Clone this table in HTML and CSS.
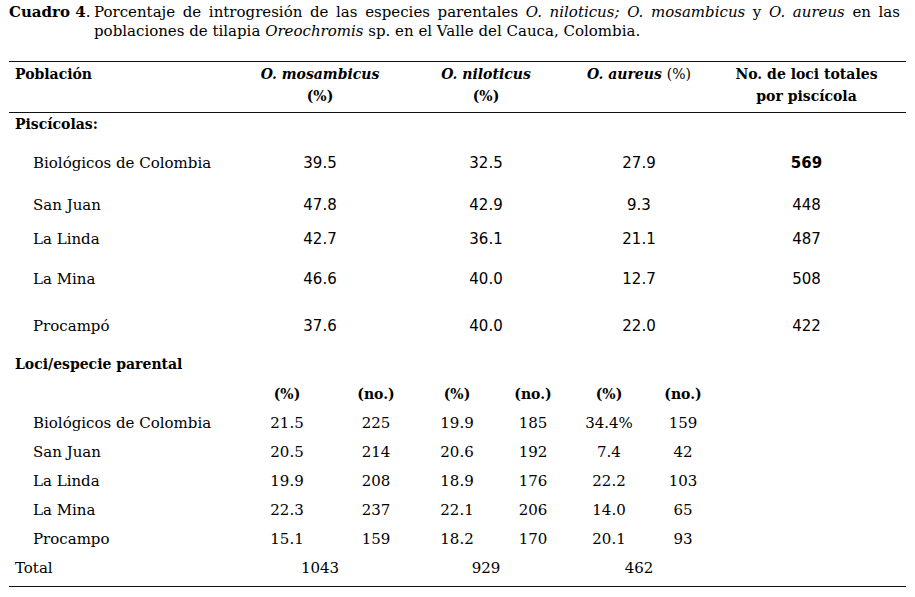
FILE: index.html
```html
<!DOCTYPE html>
<html lang="es">
<head>
<meta charset="utf-8">
<title>Cuadro 4</title>
<link rel="stylesheet" href="styles.css">
</head>
<body>
<div class="page">
  <div class="caption">
    <div class="cap-label"><b>Cuadro 4</b>.</div>
    <div class="cap-text">
      <div class="cap-line1">Porcentaje de introgresión de las especies parentales <i>O. niloticus;</i> <i>O. mosambicus</i> y <i>O. aureus</i> en las</div>
      <div>poblaciones de tilapia <i>Oreochromis</i> sp. en el Valle del Cauca, Colombia.</div>
    </div>
  </div>

  <div class="rule rule-top"></div>

  <div class="grid-top head">
    <div class="c-label hlabel">Población</div>
    <div class="c"><i>O. mosambicus</i><br>(%)</div>
    <div class="c"><i>O. niloticus</i><br>(%)</div>
    <div class="c"><i>O. aureus</i> <span class="reg">(%)</span></div>
    <div class="c">No. de loci totales<br>por piscícola</div>
  </div>

  <div class="rule"></div>

  <div class="section-title first">Piscícolas:</div>

  <div class="grid-top row sp1">
    <div class="c-label">Biológicos de Colombia</div>
    <div class="c num">39.5</div><div class="c num">32.5</div><div class="c num">27.9</div><div class="c num strong">569</div>
  </div>
  <div class="grid-top row sp2">
    <div class="c-label">San Juan</div>
    <div class="c num">47.8</div><div class="c num">42.9</div><div class="c num">9.3</div><div class="c num">448</div>
  </div>
  <div class="grid-top row sp3">
    <div class="c-label">La Linda</div>
    <div class="c num">42.7</div><div class="c num">36.1</div><div class="c num">21.1</div><div class="c num">487</div>
  </div>
  <div class="grid-top row sp4">
    <div class="c-label">La Mina</div>
    <div class="c num">46.6</div><div class="c num">40.0</div><div class="c num">12.7</div><div class="c num">508</div>
  </div>
  <div class="grid-top row sp5">
    <div class="c-label">Procampó</div>
    <div class="c num">37.6</div><div class="c num">40.0</div><div class="c num">22.0</div><div class="c num">422</div>
  </div>

  <div class="section-title sp6">Loci/especie parental</div>

  <div class="grid-bot sub">
    <div></div>
    <div class="c">(%)</div><div class="c">(no.)</div><div class="c">(%)</div><div class="c">(no.)</div><div class="c">(%)</div><div class="c">(no.)</div>
  </div>
  <div class="grid-bot line">
    <div class="c-label">Biológicos de Colombia</div>
    <div class="c">21.5</div><div class="c">225</div><div class="c">19.9</div><div class="c">185</div><div class="c">34.4%</div><div class="c">159</div>
  </div>
  <div class="grid-bot line">
    <div class="c-label">San Juan</div>
    <div class="c">20.5</div><div class="c">214</div><div class="c">20.6</div><div class="c">192</div><div class="c">7.4</div><div class="c">42</div>
  </div>
  <div class="grid-bot line">
    <div class="c-label">La Linda</div>
    <div class="c">19.9</div><div class="c">208</div><div class="c">18.9</div><div class="c">176</div><div class="c">22.2</div><div class="c">103</div>
  </div>
  <div class="grid-bot line">
    <div class="c-label">La Mina</div>
    <div class="c">22.3</div><div class="c">237</div><div class="c">22.1</div><div class="c">206</div><div class="c">14.0</div><div class="c">65</div>
  </div>
  <div class="grid-bot line">
    <div class="c-label">Procampo</div>
    <div class="c">15.1</div><div class="c">159</div><div class="c">18.2</div><div class="c">170</div><div class="c">20.1</div><div class="c">93</div>
  </div>
  <div class="grid-top line">
    <div class="c-label total">Total</div>
    <div class="c">1043</div><div class="c">929</div><div class="c">462</div><div></div>
  </div>

  <div class="rule rule-bottom"></div>
</div>
</body>
</html>
```

FILE: styles.css
```css
html, body {
  margin: 0;
  padding: 0;
  background: #ffffff;
}

body {
  font-family: "DejaVu Serif", "Liberation Serif", serif;
  font-size: 15px;
  color: #000;
}

.page {
  width: 897px;
  padding: 3px 9px 0 9px;
}

.caption {
  display: flex;
  line-height: 19px;
}

.cap-label {
  flex: none;
  width: 85px;
}

.cap-text {
  flex: 1;
  padding-right: 6px;
}

.cap-line1 {
  text-align: justify;
  text-align-last: justify;
}

.rule {
  border-top: 1px solid #111;
}

.rule-top {
  margin-top: 20px;
}

.rule-bottom {
  margin-top: 3px;
}

.grid-top {
  display: grid;
  grid-template-columns: 230px 162px 170px 136px 199px;
}

.grid-bot {
  display: grid;
  grid-template-columns: 236px 84px 94px 68px 84px 68px 80px 1fr;
}

.c {
  text-align: center;
}

.c-label {
  padding-left: 24px;
  white-space: nowrap;
}

.head {
  font-weight: bold;
  font-size: 14px;
  line-height: 22px;
  padding: 1px 0 5px;
}

.head .hlabel {
  padding-left: 6px;
}

.head .reg {
  font-weight: normal;
}

.section-title {
  font-weight: bold;
  font-size: 14px;
  line-height: 22px;
  padding-left: 6px;
}

.row {
  line-height: 22px;
}

.num {
  font-family: "DejaVu Sans", "Liberation Sans", sans-serif;
}

.strong {
  font-weight: bold;
}

.sp1 { margin-top: 17px; }
.sp2 { margin-top: 20px; }
.sp3 { margin-top: 12px; }
.sp4 { margin-top: 18px; }
.sp5 { margin-top: 25px; }
.sp6 { margin-top: 16px; }

.sub {
  font-weight: bold;
  font-size: 14px;
  line-height: 22px;
  margin-top: 8px;
  padding-bottom: 4px;
}

.line {
  line-height: 29px;
}

.total {
  padding-left: 6px;
}
```
